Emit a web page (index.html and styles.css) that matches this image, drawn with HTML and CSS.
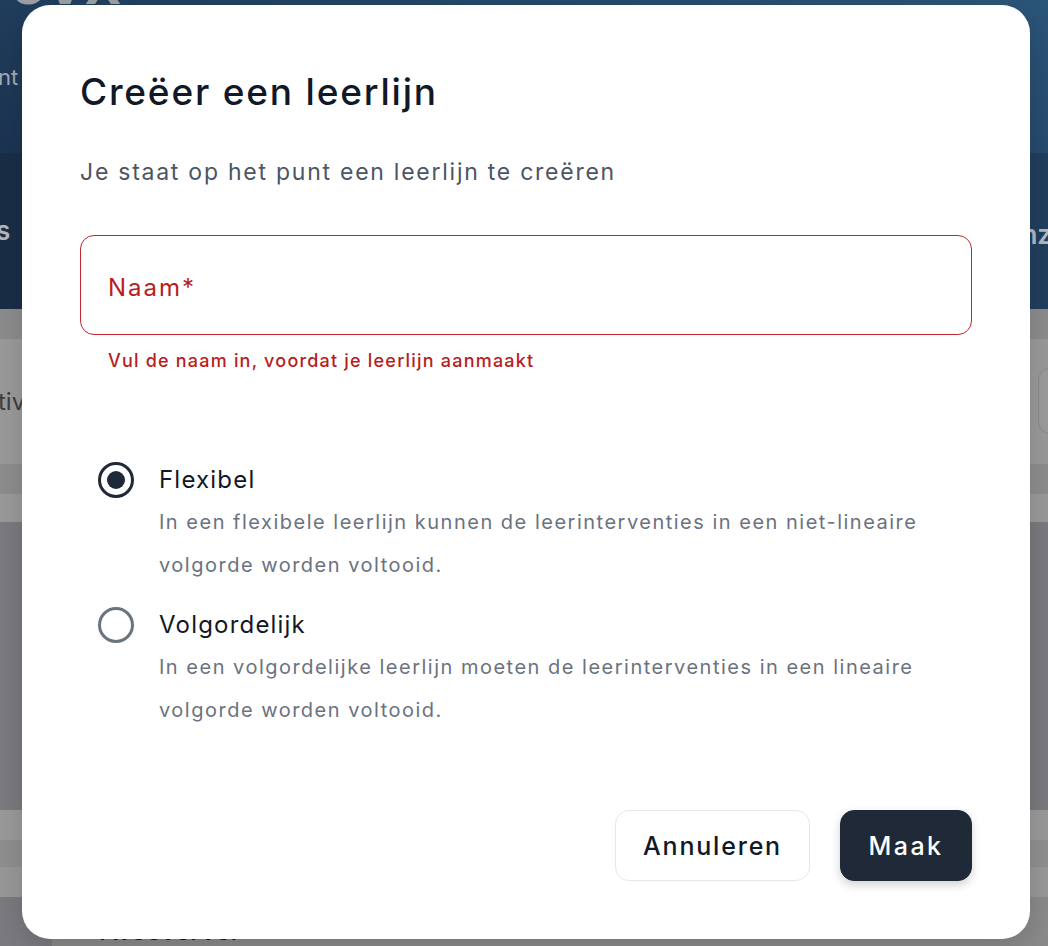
FILE: index.html
```html
<!DOCTYPE html>
<html lang="nl">
<head>
<meta charset="utf-8">
<title>Creëer een leerlijn</title>
<link rel="stylesheet" href="styles.css">
</head>
<body>
<div class="page">
  <header class="topbar">
    <div class="logo">cvx</div>
    <div class="top-sub">nt</div>
  </header>
  <nav class="navband">
    <span class="nav-left">s</span>
    <span class="nav-right">nz</span>
  </nav>
  <div class="strip strip-a"></div>
  <div class="filters">
    <span class="filter-text">tiv</span>
    <span class="filter-box"></span>
  </div>
  <div class="strip strip-b"></div>
  <div class="strip strip-c"></div>
  <div class="table-area"></div>
  <div class="strip strip-d"></div>
  <div class="strip strip-e"></div>
  <div class="strip strip-f"></div>
  <div class="bottom-row">
    <div class="bottom-card"><span class="bottom-text">Tweeverver</span></div>
  </div>
</div>

<div class="modal" role="dialog" aria-labelledby="modal-title">
  <h1 class="modal-title" id="modal-title">Creëer een leerlijn</h1>
  <p class="modal-sub">Je staat op het punt een leerlijn te creëren</p>

  <div class="field field-error">
    <span class="field-label">Naam*</span>
  </div>
  <p class="field-msg">Vul de naam in, voordat je leerlijn aanmaakt</p>

  <div class="options">
    <div class="option">
      <span class="radio radio-on"><span class="radio-dot"></span></span>
      <div class="option-text">
        <div class="option-label">Flexibel</div>
        <div class="option-desc">In een flexibele leerlijn kunnen de leerinterventies in een niet-lineaire volgorde worden voltooid.</div>
      </div>
    </div>
    <div class="option">
      <span class="radio"></span>
      <div class="option-text">
        <div class="option-label">Volgordelijk</div>
        <div class="option-desc">In een volgordelijke leerlijn moeten de leerinterventies in een lineaire volgorde worden voltooid.</div>
      </div>
    </div>
  </div>

  <div class="modal-footer">
    <button class="btn btn-secondary" type="button">Annuleren</button>
    <button class="btn btn-primary" type="button">Maak</button>
  </div>
</div>
</body>
</html>
```

FILE: styles.css
```css
* { box-sizing: border-box; }

html, body {
  margin: 0;
  padding: 0;
}

body {
  width: 1048px;
  height: 946px;
  overflow: hidden;
  background: #7c7c80;
  font-family: Inter, "Noto Sans", "Liberation Sans", sans-serif;
}

/* ---------- dimmed background page ---------- */
.page {
  display: flex;
  flex-direction: column;
  height: 946px;
}

.topbar {
  height: 155px;
  background: linear-gradient(20deg, #1c3450 0%, #234567 55%, #2b5579 100%);
  overflow: hidden;
}

.logo {
  font-family: "Liberation Sans", sans-serif;
  font-weight: 700;
  font-size: 64px;
  line-height: 64px;
  color: #9c9fa3;
  margin-top: -50px;
  margin-left: 10px;
  letter-spacing: 2px;
}

.top-sub {
  margin-top: 50px;
  font-size: 22px;
  color: #a4abb3;
  margin-left: -2px;
}

.navband {
  height: 158px;
  background: linear-gradient(90deg, #1a2e47 0%, #1d3552 50%, #213f5e 100%);
  display: flex;
  justify-content: space-between;
  align-items: center;
  font-size: 26px;
  font-weight: 600;
  color: #b5b9bf;
}

.nav-left { margin-left: -4px; }
.nav-right { margin-right: -4px; margin-top: 8px; }

.strip { flex: none; }
.strip-a { height: 30px; background: #8c8c8d; }
.strip-b { height: 30px; background: #8d8d8e; }
.strip-c { height: 28px; background: #9a9a9b; }
.strip-d { height: 30px; background: #9a9a9b; }
.strip-e { height: 27px; background: #8f8f90; }
.strip-f { height: 30px; background: #989899; }

.filters {
  height: 127px;
  background: #9a9a9b;
  display: flex;
  align-items: center;
  justify-content: space-between;
}

.filter-text {
  font-size: 24px;
  color: #3d3d3f;
  margin-left: -2px;
}

.filter-box {
  width: 60px;
  height: 66px;
  margin-right: -50px;
  border: 1px solid #8a8a8b;
  border-radius: 12px;
  background: #9c9c9d;
}

.table-area {
  height: 292px;
  background: linear-gradient(90deg, #7b7b7f 0%, #77777b 50%, #7a7a7e 100%);
}

.bottom-row {
  flex: 1;
  background: #7b7b7f;
  padding-left: 52px;
}

.bottom-card {
  height: 100%;
  background: #8a8a8b;
  padding-left: 42px;
}

.bottom-text {
  display: block;
  padding-top: 18px;
  font-size: 26px;
  font-weight: 500;
  color: #111418;
}

/* ---------- modal ---------- */
.modal {
  position: absolute;
  left: 22px;
  top: 5px;
  width: 1008px;
  height: 934px;
  background: #ffffff;
  border-radius: 28px;
  padding: 67px 58px 58px 58px;
  display: flex;
  flex-direction: column;
  box-shadow: 0 10px 30px rgba(0, 0, 0, 0.15);
}

.modal-title {
  margin: 0;
  font-size: 37px;
  line-height: 40px;
  font-weight: 500;
  color: #111827;
  letter-spacing: 1.8px;
}

.modal-sub {
  margin: 45px 0 0 0;
  font-size: 23px;
  line-height: 30px;
  font-weight: 400;
  color: #4b5563;
  letter-spacing: 1.75px;
}

.field {
  margin-top: 48px;
  height: 100px;
  border: 1px solid #c0262d;
  border-radius: 14px;
  display: flex;
  align-items: center;
  padding: 5px 0 0 27px;
}

.field-label {
  font-size: 24px;
  color: #b91c1c;
  font-weight: 400;
  letter-spacing: 2px;
}

.field-msg {
  margin: 14px 0 0 28px;
  font-size: 18px;
  line-height: 24px;
  font-weight: 500;
  color: #b91c1c;
  letter-spacing: 1.2px;
}

.options {
  margin-top: 88px;
  padding-left: 18px;
  display: flex;
  flex-direction: column;
  gap: 19px;
}

.option {
  display: flex;
  gap: 25px;
  align-items: flex-start;
}

.radio {
  flex: none;
  width: 36px;
  height: 36px;
  margin-top: 1px;
  border-radius: 50%;
  border: 3px solid #6b7280;
  display: flex;
  align-items: center;
  justify-content: center;
}

.radio-on {
  border-color: #1f2937;
}

.radio-dot {
  width: 18px;
  height: 18px;
  border-radius: 50%;
  background: #1f2937;
}

.option-label {
  font-size: 24px;
  line-height: 38px;
  color: #111827;
  letter-spacing: 1.2px;
}

.option-desc {
  font-size: 20px;
  line-height: 43px;
  color: #6b7280;
  letter-spacing: 1.5px;
  padding-top: 2px;
}

.modal-footer {
  margin-top: auto;
  display: flex;
  justify-content: flex-end;
  gap: 30px;
}

.btn {
  height: 71px;
  border-radius: 14px;
  font-family: inherit;
  font-size: 25px;
  font-weight: 500;
  cursor: pointer;
  padding: 0;
}

.btn-secondary {
  width: 195px;
  background: #ffffff;
  border: 1px solid #e5e7eb;
  color: #111827;
  letter-spacing: 1.8px;
}

.btn-primary {
  width: 132px;
  background: #1f2937;
  border: 1px solid #1f2937;
  color: #ffffff;
  letter-spacing: 2.4px;
  box-shadow: 0 4px 10px rgba(0, 0, 0, 0.18);
}
```
